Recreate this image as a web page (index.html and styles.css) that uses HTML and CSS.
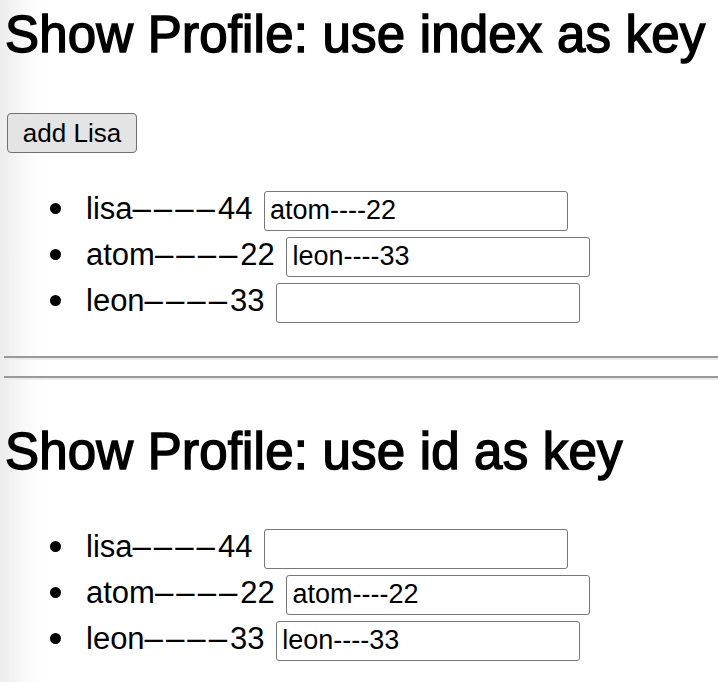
FILE: index.html
```html
<!DOCTYPE html>
<html>
<head>
<meta charset="utf-8">
<link rel="stylesheet" href="styles.css">
</head>
<body>
<h1 class="title first">Show Profile: use index as key</h1>
<button class="add-btn">add Lisa</button>
<ul class="list first-list">
  <li class="item">lisa<span class="dash">––––</span>44 <input class="field" type="text" value="atom----22"></li>
  <li class="item">atom<span class="dash">––––</span>22 <input class="field" type="text" value="leon----33"></li>
  <li class="item">leon<span class="dash">––––</span>33 <input class="field" type="text" value=""></li>
</ul>
<hr class="rule rule-one">
<hr class="rule rule-two">
<h2 class="title second">Show Profile: use id as key</h2>
<ul class="list second-list">
  <li class="item">lisa<span class="dash">––––</span>44 <input class="field" type="text" value=""></li>
  <li class="item">atom<span class="dash">––––</span>22 <input class="field" type="text" value="atom----22"></li>
  <li class="item">leon<span class="dash">––––</span>33 <input class="field" type="text" value="leon----33"></li>
</ul>
</body>
</html>
```
FILE: styles.css
```css
html, body {
  margin: 0;
  padding: 0;
}
body {
  min-height: 682px;
  background: linear-gradient(90deg, #ececec 0, #f8f8f8 22px, #ffffff 44px);
  font-family: "Liberation Sans", Arial, sans-serif;
  color: #000;
  overflow: hidden;
}
.title {
  font-size: 51px;
  font-weight: normal;
  line-height: 60px;
  margin: 0 0 0 5px;
  white-space: nowrap;
  letter-spacing: 0.2px;
  -webkit-text-stroke: 1.5px #000;
}
.title.first {
  margin-top: 5px;
}
.title.second {
  margin-top: 42px;
}
.add-btn {
  display: block;
  margin: 48px 0 0 7px;
  width: 130px;
  height: 40px;
  padding: 0;
  font-family: "Liberation Sans", Arial, sans-serif;
  font-size: 26px;
  color: #000;
  background: #e4e4e4;
  border: 1px solid #707070;
  border-radius: 4px;
}
.list {
  list-style: none;
  margin: 33px 0 0 0;
  padding: 0 0 0 50px;
}
.second-list {
  margin-top: 42px;
}
.item {
  font-size: 31px;
  line-height: 46px;
  height: 46px;
  white-space: nowrap;
}
.item::before {
  content: "";
  display: inline-block;
  width: 11px;
  height: 11px;
  border-radius: 50%;
  background: #000;
  margin-right: 25px;
  vertical-align: 5px;
}
.dash {
  font-size: 33px;
  line-height: 1;
  letter-spacing: 3px;
}
.field {
  box-sizing: border-box;
  width: 304px;
  height: 40px;
  margin: 0 0 0 3px;
  padding: 0 5px;
  font-family: "Liberation Sans", Arial, sans-serif;
  font-size: 27px;
  color: #000;
  background: #fff;
  border: 1px solid #777;
  border-radius: 3px;
  vertical-align: baseline;
}
.rule {
  display: block;
  height: 0;
  margin: 0 0 0 4px;
  border: 0;
  border-top: 2px solid #999;
  border-bottom: 2px solid #ececec;
}
.rule-one {
  margin-top: 32px;
}
.rule-two {
  margin-top: 16px;
}
```
